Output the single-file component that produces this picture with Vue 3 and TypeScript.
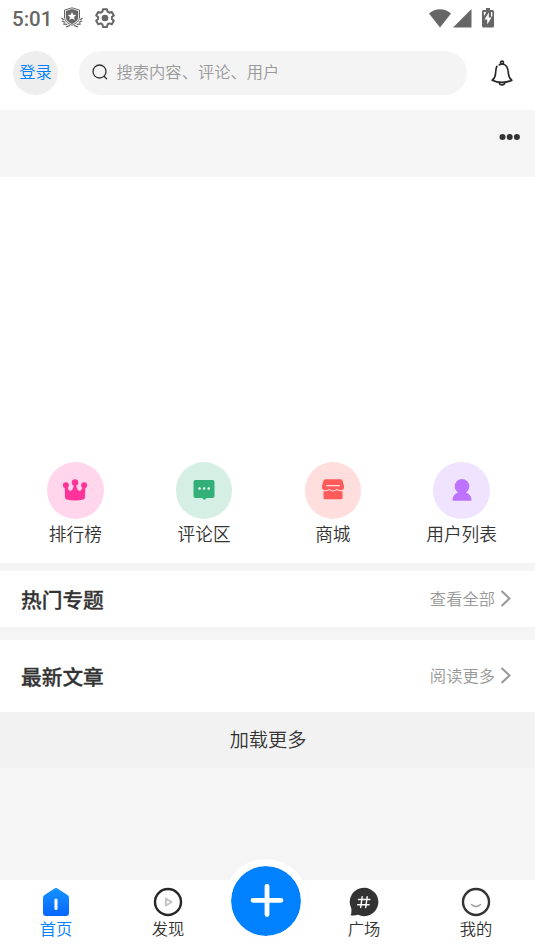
<script setup lang="ts">
interface Item { id: string; label: string }

const categories: Item[] = [
  { id: 'rank', label: '排行榜' },
  { id: 'comments', label: '评论区' },
  { id: 'shop', label: '商城' },
  { id: 'users', label: '用户列表' },
]
const tabs: Item[] = [
  { id: 'home', label: '首页' },
  { id: 'discover', label: '发现' },
  { id: 'add', label: '' },
  { id: 'square', label: '广场' },
  { id: 'mine', label: '我的' },
]
</script>

<template>
  <div class="app">
    <div class="status">
      <span class="time">5:01</span>
      <svg class="badge" width="22" height="22" viewBox="0 0 22 22">
        <path d="M11 .8 18.500 3v7c0 4-3.500 6.600-7.500 8.200C7 16.600 3.500 14 3.500 10V3z" fill="#fff" stroke="#666" stroke-width="1" />
        <path d="M11 2 17.200 3.900v6c0 3.300-2.800 5.700-6.200 7.100C7.600 15.600 4.800 13.200 4.800 9.900v-6z" fill="#666" />
        <path d="m11 5 1.300 2.800 3 .3-2.300 2 .7 3-2.700-1.600-2.700 1.600.7-3-2.300-2 3-.3z" fill="#fff" />
        <path d="m.4 11 2.600 2M.8 14l3.400 1.400M2.300 17l4 .3M5 20l4-1.700M21.600 11 19 13M21.200 14l-3.400 1.400M19.700 17l-4 .3M17 20l-4-1.700" fill="none" stroke="#666" stroke-width="1.300" />
      </svg>
      <svg class="gear" width="20" height="20" viewBox="0 0 20 20">
        <path d="M8 1.200h4l.6 2.500 1.700 1 2.500-.8 2 3.500-1.900 1.700v1.900l1.900 1.700-2 3.500-2.500-.8-1.700 1-.6 2.500H8l-.6-2.500-1.700-1-2.500.8-2-3.500L3.100 11V9.100L1.200 7.400l2-3.500 2.500.8 1.700-1z" fill="none" stroke="#666" stroke-width="2" stroke-linejoin="round" />
        <circle cx="10" cy="10" r="3.300" fill="#666" />
      </svg>
      <div class="signals">
        <svg width="22" height="19" viewBox="0 0 22 19"><path d="M0 4.500C6-1.300 16-1.300 22 4.500L11 18.500z" fill="#666" /></svg>
        <svg width="19" height="19" viewBox="0 0 19 19"><path d="M18.500 0v18.500H0z" fill="#666" /></svg>
        <svg class="battery" width="12" height="20" viewBox="0 0 12 20">
          <path d="M4 0h4v2h2.500Q12 2 12 3.500v14.500q0 1.500-1.500 1.500h-9Q0 19.500 0 18V3.500Q0 2 1.500 2H4z" fill="#666" />
          <path d="M6.800 4.500 2.500 11.500h2.700v5l4.300-7H6.800zM1.700 4h2.600L2 8zM9 4h1.300v4.500H9z" fill="#fff" />
        </svg>
      </div>
    </div>

    <header class="header">
      <div class="login">登录</div>
      <div class="search">
        <svg width="16" height="16" viewBox="0 0 16 16" fill="none" stroke="#333" stroke-width="1.300" stroke-linecap="round">
          <circle cx="7.500" cy="7.500" r="6.500" /><path d="m12.300 12.500 2.300 2.300" />
        </svg>
        <span>搜索内容、评论、用户</span>
      </div>
      <svg class="bell" width="22" height="27" viewBox="0 0 22 27" fill="none" stroke="#282828" stroke-width="1.700" stroke-linecap="round" stroke-linejoin="round">
        <path d="M5.800 6.300C4.700 8.500 4.800 11 4.500 14c-.3 3-1.100 4.800-3.300 6.200 5.600 2.900 14 2.900 19.600 0-2.200-1.400-3-3.200-3.300-6.200-.3-6-1.600-10-6.500-10q-1.500 0-2.600.8" />
        <circle cx="11" cy="2.700" r="1.500" />
        <path d="M8.300 23.200c.8 2.200 4.600 2.200 5.400 0" />
      </svg>
    </header>

    <div class="more">
      <svg width="22" height="8" viewBox="0 0 22 8" fill="#333"><circle cx="3.500" cy="4" r="3" /><circle cx="10.700" cy="4" r="3" /><circle cx="17.900" cy="4" r="3" /></svg>
    </div>

    <div class="banner"></div>
    <div class="categories">
      <div v-for="c in categories" :key="c.id" class="category">
        <div class="disc" :class="c.id">
          <svg v-if="c.id === 'rank'" width="26" height="26" viewBox="0 0 26 26" fill="#ff3399">
            <circle cx="3.900" cy="8.200" r="3" /><circle cx="13" cy="5.500" r="3.200" /><circle cx="22.100" cy="8.200" r="3" />
            <path d="M2.700 9.500 5 9c1 3.300 2.300 5.500 4 4.800 1.700-.7 2.500-3 2.800-6.500h2.400c.3 3.500 1.100 5.800 2.800 6.500 1.700.7 3-1.500 4-4.800l2.300.5L23 20.500Q22.900 22 21.300 22.400 13 24.500 4.700 22.400 3.100 22 3 20.500z" />
          </svg>
          <svg v-else-if="c.id === 'comments'" width="26" height="26" viewBox="0 0 26 26">
            <path d="M4.500 3H21.500q2 0 2 2v14q0 2-2 2h-5.700L13.400 23 11 21H4.500q-2 0-2-2V5q0-2 2-2z" fill="#33b077" />
            <g fill="#fff"><circle cx="8.500" cy="11.500" r="1.200" /><circle cx="13.100" cy="11.500" r="1.200" /><circle cx="17.700" cy="11.500" r="1.200" /></g>
          </svg>
          <svg v-else-if="c.id === 'shop'" width="26" height="26" viewBox="0 0 26 26">
            <path d="M5.500 2.200h15q1.500 0 2 1.300L24 9q.4 4.300-3.300 4.300-2.400 0-3.800-1.500-1.800 1.700-3.900 1.700t-3.900-1.700q-1.400 1.500-3.800 1.500Q1.600 13.300 2 9l1.500-5.500q.5-1.300 2-1.300z" fill="#ff5b5b" />
            <path d="M3.500 14.100q3.300.8 5.600-1 1.900 1.400 3.900 1.400t3.900-1.400q2.300 1.800 5.600 1v7.100q0 1-1 1h-17q-1 0-1-1z" fill="#ff5b5b" />
            <path d="M6.500 8.600h13" stroke="#ffdedd" stroke-width="1.300" stroke-linecap="round" />
          </svg>
          <svg v-else width="26" height="26" viewBox="0 0 26 26" fill="#bd73ff">
            <circle cx="13" cy="9.400" r="7.300" />
            <path d="M9 13.500h8v2c3.200 1 4.800 3.400 5.500 6.500q.2 1.700-.7 1.700H4.200q-.9 0-.7-1.700c.7-3.100 2.300-5.500 5.500-6.500z" />
          </svg>
        </div>
        <span>{{ c.label }}</span>
      </div>
    </div>

    <section class="section topics">
      <h2>热门专题</h2>
      <a>查看全部<svg width="12" height="18" viewBox="0 0 12 18" fill="none" stroke="#999" stroke-width="2"><path d="m1.500 2 8 7.500-8 7.500" /></svg></a>
    </section>
    <section class="section articles">
      <h2>最新文章</h2>
      <a>阅读更多<svg width="12" height="18" viewBox="0 0 12 18" fill="none" stroke="#999" stroke-width="2"><path d="m1.500 2 8 7.500-8 7.500" /></svg></a>
    </section>
    <div class="load">加载更多</div>

    <nav class="nav">
      <div v-for="t in tabs" :key="t.id" class="tab" :class="t.id">
        <div v-if="t.id === 'add'" class="plus">
          <svg width="34" height="34" viewBox="0 0 34 34"><path d="M17 2.300v28.200M3 16.300h28" stroke="#fff" stroke-width="4.800" stroke-linecap="round" /></svg>
        </div>
        <template v-else>
          <svg v-if="t.id === 'home'" width="30" height="30" viewBox="0 0 30 30">
            <defs><linearGradient id="blue" x1="0" y1="0" x2="0" y2="1"><stop offset="0" stop-color="#1593ff" /><stop offset="1" stop-color="#0866ff" /></linearGradient></defs>
            <path d="M13.500 1.400q1.500-.9 3 0L26.500 8q1.500 1 1.500 2.700V26q0 3-3 3H5q-3 0-3-3V10.700Q2 9 3.500 8z" fill="url(#blue)" />
            <path d="M15 13v8.500" stroke="#fff" stroke-width="3" stroke-linecap="round" />
          </svg>
          <svg v-else-if="t.id === 'discover'" width="30" height="30" viewBox="0 0 30 30" fill="none">
            <circle cx="15" cy="15" r="13" stroke="#282828" stroke-width="2.400" />
            <path d="M12.800 11.500v7l6-3.500z" stroke="#c4c4c4" stroke-width="2" stroke-linejoin="round" />
          </svg>
          <svg v-else-if="t.id === 'square'" width="30" height="30" viewBox="0 0 30 30">
            <path d="M15 .8a14.200 14.200 0 1 1-6 27Q5 29 1.500 28.200q1.300-1.700.8-6.700A14.200 14.200 0 0 1 15 .8z" fill="#333" />
            <path d="m13.200 9.700-1.500 10.800M18.200 9.700l-1.500 10.800M9.500 12.500h11.400M8.700 17.700h11.400" stroke="#fff" stroke-width="1.400" stroke-linecap="round" />
          </svg>
          <svg v-else width="30" height="30" viewBox="0 0 30 30" fill="none">
            <circle cx="15" cy="15" r="13" stroke="#333" stroke-width="2.400" />
            <path d="M10.500 17.500q4.500 4 9 0" stroke="#999" stroke-width="1.400" stroke-linecap="round" />
          </svg>
          <span>{{ t.label }}</span>
        </template>
      </div>
    </nav>
  </div>
</template>

<style>
body { margin: 0; background: #f5f5f5; }
</style>
<style scoped>
* { box-sizing: border-box; }
svg { display: block; flex: none; }
.app { width: 535px; height: 951px; display: flex; flex-direction: column; overflow: hidden; background: #f5f5f5; color: #333; font-family: "Noto Sans CJK SC", sans-serif; font-weight: 350; font-size: 16.3px; line-height: 24px; }
.status { height: 36px; flex: none; display: flex; align-items: center; padding: 0 41px 0 12px; background: #fff; }
.time { width: 49px; font: 500 20.5px/36px Roboto, sans-serif; color: #666; padding-top: 2px; }
.badge { margin-right: 12px; }
.signals { display: flex; margin-left: auto; align-items: center; gap: 2px; }
.battery { margin-left: 8px; margin-top: -1px; }
.header { height: 74px; flex: none; display: flex; align-items: flex-start; padding: 15px 22.500px 0 13px; background: #fff; }
.login { width: 45px; height: 44px; border-radius: 50%; background: #eee; color: #0081ff; line-height: 41px; text-align: center; margin-right: 21px; }
.search { width: 388px; height: 44px; border-radius: 22px; background: #f4f4f4; color: #999; display: flex; align-items: center; padding: 0 12.500px 2px; gap: 9px; line-height: 40px; }
.search span { height: 42px; }
.bell { margin-left: auto; margin-top: 8.500px; }
.more { height: 67px; flex: none; display: flex; justify-content: flex-end; padding: 23px 14px 0 0; }
.banner { height: 285px; flex: none; background: #fff; }
.categories { height: 101px; flex: none; background: #fff; display: flex; padding: 0 9px 0 11px; }
.category { flex: 1; display: flex; flex-direction: column; align-items: center; font-size: 17.7px; line-height: 29px; }
.disc { width: 56.500px; height: 56.500px; margin-bottom: .5px; padding-bottom: 1px; border-radius: 50%; display: flex; align-items: center; justify-content: center; }
.disc.rank { background: #ffd6eb; }
.disc.comments { background: #d6efe4; }
.disc.shop { background: #ffdedd; }
.disc.users { background: #f0e3ff; }
.section { flex: none; background: #fff; display: flex; justify-content: space-between; align-items: center; padding: 0 23px 0 21px; }
.topics { height: 56px; margin-top: 8px; }
.articles { height: 72px; margin-top: 13px; }
h2 { margin: 0; font-size: 20.7px; font-weight: 500; -webkit-text-stroke: .3px currentColor; line-height: 30px; }
.section a { display: flex; align-items: center; gap: 5px; color: #999; padding-bottom: 2px; }
.load { height: 56px; flex: none; background: #f2f2f2; text-align: center; font-size: 19.2px; line-height: 54px; padding-left: 1px; }
.nav { height: 71px; margin-top: auto; flex: none; background: #fff; display: flex; }
.tab { width: 112px; flex: none; display: flex; flex-direction: column; align-items: center; padding-top: 7px; line-height: 22px; }
.home { color: #0081ff; }
.tab.add { width: 84px; padding: 0; }
.plus { width: 84px; height: 84px; margin-top: -21px; flex: none; border: 7px solid #fff; border-radius: 50%; background: #0081ff; background-clip: padding-box; box-shadow: 0 0 1px #eee; display: flex; align-items: center; justify-content: center; padding-left: 2px; }
</style>
